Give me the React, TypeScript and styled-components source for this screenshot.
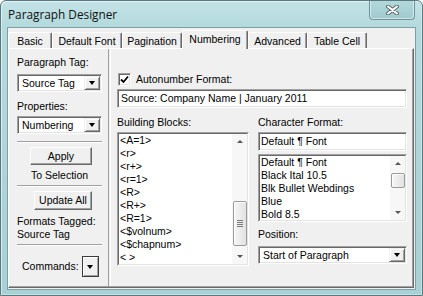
import styled, { createGlobalStyle } from "styled-components";

const GlobalStyle = createGlobalStyle`
  html, body {
    margin: 0;
    padding: 0;
    background: #ffffff;
  }
  body {
    font-family: "Liberation Sans", Arial, sans-serif;
    font-size: 10.5px;
    line-height: 13px;
    color: #000;
  }
`;

const Window = styled.div`
  width: 423px;
  height: 296px;
  box-sizing: border-box;
  border: 1px solid #58797d;
  border-radius: 6px 6px 0 0;
  background: linear-gradient(#c3e3e6 0px, #b4dade 24px, #a8d1d5 100%);
  box-shadow: inset 1px 1px 0 rgba(255, 255, 255, 0.55),
    inset -1px -1px 0 rgba(255, 255, 255, 0.35);
  padding: 0 6px 5px 6px;
  display: flex;
  flex-direction: column;
`;

const TitleBar = styled.div`
  height: 26px;
  flex-shrink: 0;
  display: flex;
  justify-content: space-between;
  align-items: flex-start;
`;

const Title = styled.span`
  font-family: "Open Sans", "Liberation Sans", sans-serif;
  font-size: 11.8px;
  line-height: 15px;
  padding: 6px 0 0 1px;
  color: #111;
`;

const CloseButton = styled.div`
  width: 46px;
  height: 19px;
  margin-right: 1px;
  box-sizing: border-box;
  border: 1px solid #6c9599;
  border-top: none;
  border-radius: 0 0 4px 4px;
  background: linear-gradient(#b3d8db, #a1cace);
  box-shadow: inset 1px 0 0 rgba(255, 255, 255, 0.5),
    inset -1px -1px 0 rgba(255, 255, 255, 0.5);
  display: flex;
  align-items: center;
  justify-content: center;
`;

const Client = styled.div`
  flex: 1;
  background: #f0f0f0;
  border: 1px solid #7d9ea2;
  padding: 0 1px 1px 0;
  display: flex;
  flex-direction: column;
`;

const TabStrip = styled.div`
  height: 20px;
  flex-shrink: 0;
  display: flex;
  align-items: flex-end;
`;

const Tab = styled.div<{ $w: number; $active?: boolean }>`
  width: ${(p) => p.$w}px;
  height: ${(p) => (p.$active ? 19 : 16)}px;
  margin-bottom: ${(p) => (p.$active ? -1 : 0)}px;
  position: relative;
  z-index: ${(p) => (p.$active ? 1 : 0)};
  box-sizing: border-box;
  background: #f0f0f0;
  border-top: 1px solid #ffffff;
  border-left: 1px solid #ffffff;
  border-right: 1px solid #696969;
  border-radius: 2px 2px 0 0;
  box-shadow: inset -1px 0 0 #a0a0a0;
  padding-top: 2px;
  text-align: center;
  white-space: nowrap;
`;

const Page = styled.div`
  flex: 1;
  display: flex;
  border-top: 1px solid #ffffff;
  border-left: 1px solid #ffffff;
  border-right: 1px solid #696969;
  border-bottom: 1px solid #696969;
  box-shadow: inset -1px -1px 0 #a0a0a0;
`;

const SidePanel = styled.div`
  width: 99px;
  box-sizing: border-box;
  padding: 7px 6px 0 8px;
  display: flex;
  flex-direction: column;
`;

const VDivider = styled.div`
  width: 1px;
  margin-bottom: 1px;
  border-left: 1px solid #a0a0a0;
  border-right: 1px solid #ffffff;
`;

const HDivider = styled.div<{ $mt: number }>`
  height: 0;
  margin-top: ${(p) => p.$mt}px;
  border-top: 1px solid #a0a0a0;
  border-bottom: 1px solid #ffffff;
`;

const Label = styled.div<{ $mt?: number; $center?: boolean }>`
  margin-top: ${(p) => p.$mt ?? 0}px;
  text-align: ${(p) => (p.$center ? "center" : "left")};
  white-space: nowrap;
`;

const Select = styled.div<{ $mt?: number }>`
  height: 18px;
  margin-top: ${(p) => p.$mt ?? 0}px;
  box-sizing: border-box;
  background: #ffffff;
  border-top: 1px solid #a0a0a0;
  border-left: 1px solid #a0a0a0;
  border-bottom: 1px solid #ffffff;
  border-right: 1px solid #ffffff;
  box-shadow: inset 1px 1px 0 #696969, inset -1px -1px 0 #e3e3e3;
  padding: 1px;
  display: flex;
  align-items: center;
`;

const SelectText = styled.span`
  flex: 1;
  padding-left: 3px;
  white-space: nowrap;
  overflow: hidden;
`;

const DropButton = styled.div<{ $w?: number; $h?: number }>`
  width: ${(p) => p.$w ?? 16}px;
  height: ${(p) => (p.$h ? `${p.$h}px` : "100%")};
  box-sizing: border-box;
  background: #f0f0f0;
  border-top: 1px solid #f0f0f0;
  border-left: 1px solid #f0f0f0;
  border-right: 1px solid #696969;
  border-bottom: 1px solid #696969;
  box-shadow: inset 1px 1px 0 #ffffff, inset -1px -1px 0 #a0a0a0;
  display: flex;
  align-items: center;
  justify-content: center;
  flex-shrink: 0;
`;

const CommandButton = styled(DropButton)`
  border: 1px solid #3c3c3c;
  box-shadow: inset 1px 1px 0 #ffffff, inset -1px -1px 0 #a0a0a0;
`;

const Triangle = styled.span<{ $up?: boolean; $color?: string; $size?: number }>`
  width: 0;
  height: 0;
  border-left: ${(p) => p.$size ?? 3.5}px solid transparent;
  border-right: ${(p) => p.$size ?? 3.5}px solid transparent;
  ${(p) =>
    p.$up
      ? `border-bottom: ${(p.$size ?? 3.5) + 0.5}px solid ${p.$color ?? "#000"};`
      : `border-top: ${(p.$size ?? 3.5) + 0.5}px solid ${p.$color ?? "#000"};`}
`;

const PushButton = styled.div<{ $w: number; $h: number; $mt: number }>`
  width: ${(p) => p.$w}px;
  height: ${(p) => p.$h}px;
  margin-top: ${(p) => p.$mt}px;
  margin-right: 10px;
  align-self: flex-end;
  box-sizing: border-box;
  background: #f0f0f0;
  border-top: 1px solid #ffffff;
  border-left: 1px solid #ffffff;
  border-right: 1px solid #696969;
  border-bottom: 1px solid #696969;
  box-shadow: inset -1px -1px 0 #a0a0a0;
  display: flex;
  align-items: center;
  justify-content: center;
`;

const CommandRow = styled.div`
  margin-top: 10px;
  padding-left: 5px;
  display: flex;
  align-items: center;
  gap: 3px;
`;

const MainPanel = styled.div`
  flex: 1;
  box-sizing: border-box;
  padding: 24px 6px 0 6px;
  display: flex;
  flex-direction: column;
`;

const CheckRow = styled.div`
  height: 13px;
  display: flex;
  align-items: center;
  gap: 5px;
  padding-left: 1px;
`;

const CheckBox = styled.div`
  width: 13px;
  height: 13px;
  box-sizing: border-box;
  background: #ffffff;
  border-top: 1px solid #a0a0a0;
  border-left: 1px solid #a0a0a0;
  border-bottom: 1px solid #ffffff;
  border-right: 1px solid #ffffff;
  box-shadow: inset 1px 1px 0 #696969, inset -1px -1px 0 #e3e3e3;
  display: flex;
  align-items: center;
  justify-content: center;
`;

const TextField = styled.div<{ $mt: number; $pl?: number }>`
  height: 19px;
  margin-top: ${(p) => p.$mt}px;
  box-sizing: border-box;
  background: #ffffff;
  border-top: 1px solid #a0a0a0;
  border-left: 1px solid #a0a0a0;
  border-bottom: 1px solid #ffffff;
  border-right: 1px solid #ffffff;
  box-shadow: inset 1px 1px 0 #696969, inset -1px -1px 0 #e3e3e3;
  padding: 2px 0 0 ${(p) => p.$pl ?? 3}px;
  white-space: nowrap;
`;

const Columns = styled.div`
  margin-top: 8px;
  display: flex;
  gap: 9px;
`;

const Column = styled.div<{ $w?: number }>`
  ${(p) => (p.$w ? `width: ${p.$w}px;` : "flex: 1;")}
  display: flex;
  flex-direction: column;
`;

const ListBox = styled.div<{ $h: number; $mt: number }>`
  height: ${(p) => p.$h}px;
  margin-top: ${(p) => p.$mt}px;
  box-sizing: border-box;
  border-top: 1px solid #a0a0a0;
  border-left: 1px solid #a0a0a0;
  border-bottom: 1px solid #ffffff;
  border-right: 1px solid #ffffff;
  display: flex;
`;

const ListInner = styled.div`
  flex: 1;
  background: #ffffff;
  border-top: 1px solid #696969;
  border-left: 1px solid #696969;
  border-bottom: 1px solid #e3e3e3;
  border-right: 1px solid #e3e3e3;
  display: flex;
  overflow: hidden;
`;

const Items = styled.div`
  flex: 1;
  padding-left: 1px;
  overflow: hidden;
`;

const Item = styled.div`
  height: 13px;
  white-space: nowrap;
`;

const ScrollTrack = styled.div`
  width: 15px;
  background: #f7f7f7;
  display: flex;
  flex-direction: column;
  align-items: center;
`;

const ScrollArrow = styled.div`
  height: 15px;
  width: 15px;
  display: flex;
  align-items: center;
  justify-content: center;
  flex-shrink: 0;
`;

const ScrollGap = styled.div<{ $h: number }>`
  height: ${(p) => p.$h}px;
  flex-shrink: 0;
`;

const ScrollFill = styled.div`
  flex: 1;
`;

const Thumb = styled.div<{ $h: number }>`
  width: 14px;
  height: ${(p) => p.$h}px;
  flex-shrink: 0;
  box-sizing: border-box;
  border: 1px solid #9b9b9b;
  border-radius: 2px;
  background: linear-gradient(90deg, #f6f6f6, #e2e2e2);
  box-shadow: inset 1px 1px 0 #ffffff;
  display: flex;
  flex-direction: column;
  align-items: center;
  justify-content: center;
  gap: 1px;
`;

const Grip = styled.span`
  width: 6px;
  height: 1px;
  background: #7a7a7a;
`;

function Scrollbar({ gap, thumb, grip }: { gap: number; thumb: number; grip?: boolean }) {
  return (
    <ScrollTrack>
      <ScrollArrow>
        <Triangle $up $size={3} $color="#555" />
      </ScrollArrow>
      <ScrollGap $h={gap} />
      <Thumb $h={thumb}>
        {grip && (
          <>
            <Grip />
            <Grip />
            <Grip />
            <Grip />
          </>
        )}
      </Thumb>
      <ScrollFill />
      <ScrollArrow>
        <Triangle $size={3} $color="#555" />
      </ScrollArrow>
    </ScrollTrack>
  );
}

const tabs = [
  { label: "Basic", w: 44 },
  { label: "Default Font", w: 70 },
  { label: "Pagination", w: 60 },
  { label: "Numbering", w: 66, active: true },
  { label: "Advanced", w: 59 },
  { label: "Table Cell", w: 60 },
];

const blocks = [
  "<A=1>",
  "<r>",
  "<r+>",
  "<r=1>",
  "<R>",
  "<R+>",
  "<R=1>",
  "<$volnum>",
  "<$chapnum>",
  "< >",
];

const charFormats = [
  "Default \u00b6 Font",
  "Black Ital 10.5",
  "Blk Bullet Webdings",
  "Blue",
  "Bold 8.5",
];

export default function App() {
  return (
    <>
      <GlobalStyle />
      <Window>
        <TitleBar>
          <Title>Paragraph Designer</Title>
          <CloseButton>
            <svg width="13" height="10" viewBox="0 0 13 10">
              <path d="M2 1.5 L11 8.5 M11 1.5 L2 8.5" stroke="#5b6a6c" strokeWidth="4" strokeLinecap="round" />
              <path d="M2 1.5 L11 8.5 M11 1.5 L2 8.5" stroke="#ffffff" strokeWidth="2" strokeLinecap="round" />
            </svg>
          </CloseButton>
        </TitleBar>
        <Client>
          <TabStrip>
            {tabs.map((t) => (
              <Tab key={t.label} $w={t.w} $active={t.active}>
                {t.label}
              </Tab>
            ))}
          </TabStrip>
          <Page>
            <SidePanel>
              <Label>Paragraph Tag:</Label>
              <Select $mt={5}>
                <SelectText>Source Tag</SelectText>
                <DropButton>
                  <Triangle />
                </DropButton>
              </Select>
              <Label $mt={8}>Properties:</Label>
              <Select $mt={3}>
                <SelectText>Numbering</SelectText>
                <DropButton>
                  <Triangle />
                </DropButton>
              </Select>
              <HDivider $mt={7} />
              <PushButton $w={62} $h={18} $mt={4}>
                Apply
              </PushButton>
              <Label $mt={4} $center>
                To Selection
              </Label>
              <HDivider $mt={3} />
              <PushButton $w={58} $h={19} $mt={4}>
                Update All
              </PushButton>
              <Label $mt={5}>Formats Tagged:</Label>
              <Label>Source Tag</Label>
              <HDivider $mt={3} />
              <CommandRow>
                <span>Commands:</span>
                <CommandButton $w={17} $h={21}>
                  <Triangle />
                </CommandButton>
              </CommandRow>
            </SidePanel>
            <VDivider />
            <MainPanel>
              <CheckRow>
                <CheckBox>
                  <svg width="9" height="9" viewBox="0 0 9 9">
                    <path d="M1 4.5 L3.5 7 L8 1.5" stroke="#000" strokeWidth="1.8" fill="none" />
                  </svg>
                </CheckBox>
                <span>Autonumber Format:</span>
              </CheckRow>
              <TextField $mt={3}>Source: Company Name | January 2011</TextField>
              <Columns>
                <Column $w={132}>
                  <Label>Building Blocks:</Label>
                  <ListBox $h={134} $mt={3}>
                    <ListInner>
                      <Items>
                        {blocks.map((b) => (
                          <Item key={b}>{b}</Item>
                        ))}
                      </Items>
                      <Scrollbar gap={52} thumb={45} grip />
                    </ListInner>
                  </ListBox>
                </Column>
                <Column>
                  <Label>Character Format:</Label>
                  <TextField $mt={3} $pl={2}>
                    Default {"\u00b6"} Font
                  </TextField>
                  <ListBox $h={68} $mt={3}>
                    <ListInner>
                      <Items>
                        {charFormats.map((c) => (
                          <Item key={c}>{c}</Item>
                        ))}
                      </Items>
                      <Scrollbar gap={2} thumb={15} />
                    </ListInner>
                  </ListBox>
                  <Label $mt={6}>Position:</Label>
                  <Select $mt={5}>
                    <SelectText>Start of Paragraph</SelectText>
                    <DropButton>
                      <Triangle />
                    </DropButton>
                  </Select>
                </Column>
              </Columns>
            </MainPanel>
          </Page>
        </Client>
      </Window>
    </>
  );
}
